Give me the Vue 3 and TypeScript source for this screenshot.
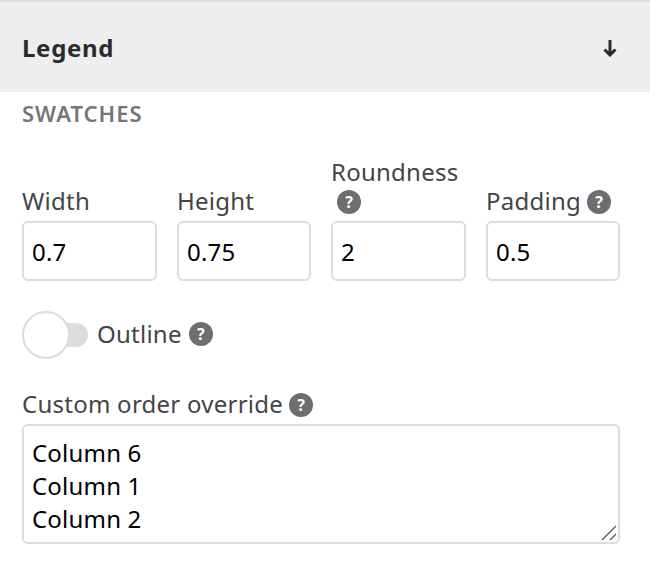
<script setup lang="ts">
import { ref } from 'vue'

interface Field {
  label: string
  value: string
  help: boolean
}

const fields = ref<Field[]>([
  { label: 'Width', value: '0.7', help: false },
  { label: 'Height', value: '0.75', help: false },
  { label: 'Roundness', value: '2', help: true },
  { label: 'Padding', value: '0.5', help: true },
])

const order = ref('Column 6\nColumn 1\nColumn 2')
</script>

<template>
  <div class="panel">
    <header class="panel-head">
      <h2>Legend</h2>
      <svg class="arrow" width="14" height="17" viewBox="0 0 14 17" aria-hidden="true">
        <path d="M7 0v15M1.5 9.5L7 15l5.500-5.500" fill="none" stroke="#2b2b2e" stroke-width="3" />
      </svg>
    </header>

    <div class="panel-body">
      <h3>SWATCHES</h3>

      <div class="fields">
        <label v-for="field in fields" :key="field.label" class="field">
          <span class="field-label">{{ field.label }}<span v-if="field.help" class="help">?</span></span>
          <input v-model="field.value" type="text" />
        </label>
      </div>

      <div class="toggle-row">
        <span class="toggle"><span class="knob"></span></span>
        <span class="toggle-label">Outline</span>
        <span class="help">?</span>
      </div>

      <label class="order">
        <span class="field-label">Custom order override<span class="help">?</span></span>
        <span class="order-box">
          <textarea v-model="order"></textarea>
          <svg class="grip" width="16" height="16" viewBox="0 0 16 16" aria-hidden="true">
            <path d="M1 15L15 1M9 15l6-6" fill="none" stroke="#666" stroke-width="1.500" />
          </svg>
        </span>
      </label>
    </div>
  </div>
</template>

<style>
html,
body {
  background: #fff;
}
</style>

<style scoped>
.panel {
  width: 650px;
  height: 568px;
  font-family: 'Noto Sans', 'Open Sans', sans-serif;
  color: #444447;
  overflow: hidden;
}

.panel-head {
  display: flex;
  align-items: center;
  justify-content: space-between;
  height: 90px;
  padding: 0 33px 0 22px;
  background: #eeeef0;
  border-top: 2px solid #dedee0;
}

.panel-head h2 {
  margin: 0;
  font-size: 24px;
  font-weight: 700;
  letter-spacing: 0.7px;
  color: #2b2b2e;
}

.arrow {
  display: block;
  margin-top: 3px;
}

.panel-body {
  padding: 7px 30px 0 22px;
}

h3 {
  margin: 0;
  font-size: 22px;
  line-height: 28px;
  font-weight: 600;
  letter-spacing: 1px;
  color: #76767a;
}

.fields {
  display: grid;
  grid-template-columns: 135px 134px 135px 134px;
  column-gap: 20px;
  align-items: end;
  margin-top: 30px;
}

.field {
  display: flex;
  flex-direction: column;
}

.field-label {
  display: block;
  font-size: 24px;
  line-height: 29px;
  letter-spacing: 0.25px;
  padding-bottom: 6px;
}

.help {
  display: inline-flex;
  align-items: center;
  justify-content: center;
  width: 24px;
  height: 24px;
  margin: -4px 0 -4px 6px;
  border-radius: 50%;
  background: #6e6e70;
  color: #fff;
  font-size: 16px;
  font-weight: 700;
  letter-spacing: 0;
  line-height: 1;
  vertical-align: 2px;
}

input,
textarea {
  box-sizing: border-box;
  width: 100%;
  margin: 0;
  border: 2px solid #dcdcdc;
  border-radius: 6px;
  background: #fff;
  font-family: inherit;
  font-size: 24px;
  letter-spacing: 0.2px;
  color: #000;
  outline: none;
}

input {
  height: 60px;
  padding: 0 8px;
}

.toggle-row {
  display: flex;
  align-items: center;
  margin-top: 30px;
  height: 48px;
}

.toggle {
  position: relative;
  width: 66px;
  height: 24px;
  border-radius: 12px;
  background: #dcdcdc;
}

.knob {
  position: absolute;
  left: 0;
  top: -12px;
  box-sizing: border-box;
  width: 48px;
  height: 48px;
  border: 2px solid #dcdcdc;
  border-radius: 50%;
  background: #fff;
}

.toggle-label {
  margin: 0 0 4px 9px;
  font-size: 24px;
  letter-spacing: 0.25px;
}

.toggle-row .help {
  margin: 0 0 2px 7px;
}

.order {
  display: block;
  margin-top: 30px;
}

.order-box {
  position: relative;
  display: block;
}

textarea {
  display: block;
  height: 120px;
  padding: 10px 8px;
  line-height: 33px;
  resize: none;
}

.grip {
  position: absolute;
  right: 3px;
  bottom: 3px;
}
</style>
